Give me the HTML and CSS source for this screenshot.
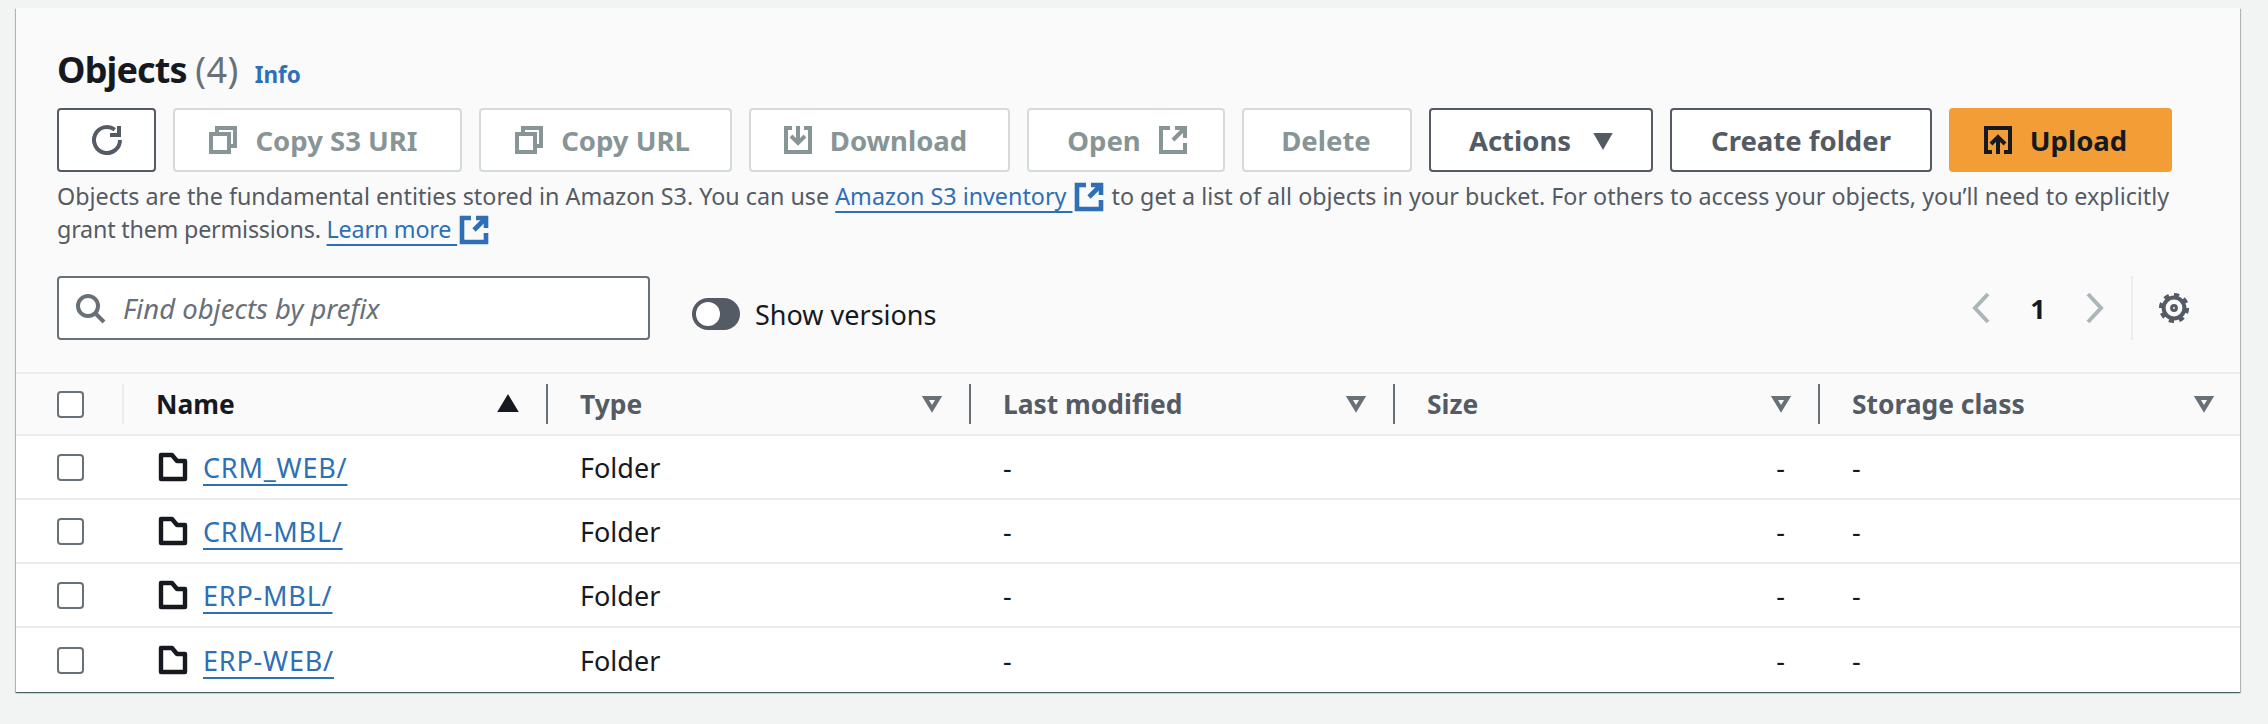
FILE: index.html
```html
<!DOCTYPE html>
<html lang="en">
<head>
<meta charset="utf-8">
<title>Objects</title>
<link rel="stylesheet" href="styles.css">
</head>
<body>
<section class="card">
  <header class="head">
    <div class="title-row">
      <h2 class="title">Objects <span class="count">(4)</span></h2>
      <a class="info">Info</a>
    </div>
    <div class="actions">
      <button class="btn on w-refresh"><svg class="ico" viewBox="0 0 16 16"><path d="M14.5 8A6.5 6.5 0 1 1 11.9 2.8"/><path d="M14 1v4.500h-4.500"/></svg></button>
      <button class="btn w-uri"><svg class="ico" viewBox="0 0 16 16"><path d="M2 5h9v9H2z"/><path d="M5 5V2h9v9h-3"/></svg>Copy S3 URI</button>
      <button class="btn w-url"><svg class="ico" viewBox="0 0 16 16"><path d="M2 5h9v9H2z"/><path d="M5 5V2h9v9h-3"/></svg>Copy URL</button>
      <button class="btn w-down"><svg class="ico" viewBox="0 0 16 16"><path d="M5 2H2v12h12V2h-3"/><path d="M8 1v8"/><path d="M4.500 6 8 9.500 11.500 6"/></svg>Download</button>
      <button class="btn w-open">Open<svg class="ico" viewBox="0 0 16 16"><path d="M6.500 2H2v12h12V9.500"/><path d="M9 2h5v5"/><path d="M14 2 8 8"/></svg></button>
      <button class="btn w-del">Delete</button>
      <button class="btn on w-act">Actions<svg class="ico solid" viewBox="0 0 16 16"><path d="M4 5h8l-4 7z"/></svg></button>
      <button class="btn on w-new">Create folder</button>
      <button class="btn primary w-up"><svg class="ico" viewBox="0 0 16 16"><path d="M5 14H2V2h12v12h-3"/><path d="M8 15V6.500"/><path d="M4.500 10 8 6.500 11.500 10"/></svg>Upload</button>
    </div>
    <p class="desc">Objects are the fundamental entities stored in Amazon S3. You can use <a class="link">Amazon S3 inventory </a><svg class="ico ext" viewBox="0 0 16 16"><path d="M6.500 2H2v12h12V9.500"/><path d="M9 2h5v5"/><path d="M14 2 8 8"/></svg> to get a list of all objects in your bucket. For others to access your objects, you’ll need to explicitly <span class="tight">grant them permissions. <a class="link">Learn more </a></span><svg class="ico ext" viewBox="0 0 16 16"><path d="M6.500 2H2v12h12V9.500"/><path d="M9 2h5v5"/><path d="M14 2 8 8"/></svg></p>
    <div class="tools">
      <label class="search">
        <svg class="ico" viewBox="0 0 16 16"><circle cx="7" cy="7" r="5"/><path d="M15 15l-4.500-4.500"/></svg>
        <span class="placeholder">Find objects by prefix</span>
      </label>
      <div class="toggle"><span class="track"><span class="knob"></span></span><span>Show versions</span></div>
      <nav class="pager">
        <svg class="ico" viewBox="0 0 16 16"><path d="M10.500 1 4 8l6.500 7"/></svg>
        <span class="page">1</span>
        <svg class="ico" viewBox="0 0 16 16"><path d="M5.500 1 12 8l-6.500 7"/></svg>
      </nav>
      <div class="prefs"><svg class="ico gear" viewBox="0 0 16 16"><circle cx="8" cy="8" r="5.200"/><circle class="teeth" cx="8" cy="8" r="6.700" pathLength="32"/><circle cx="8" cy="8" r="1.200" class="hub"/></svg></div>
    </div>
  </header>
  <div class="table">
    <div class="row head-row">
      <div class="cell first"><span class="check"></span></div>
      <div class="cell sort-col active"><span>Name</span><svg class="ico solid dark" viewBox="0 0 16 16"><path d="M8 4l4.500 7.500h-9z"/></svg></div>
      <div class="cell sort-col"><span>Type</span><svg class="ico tri" viewBox="0 0 16 16"><path d="M4.700 5h6.600L8 10.400z"/></svg></div>
      <div class="cell sort-col"><span>Last modified</span><svg class="ico tri" viewBox="0 0 16 16"><path d="M4.700 5h6.600L8 10.400z"/></svg></div>
      <div class="cell sort-col"><span>Size</span><svg class="ico tri" viewBox="0 0 16 16"><path d="M4.700 5h6.600L8 10.400z"/></svg></div>
      <div class="cell sort-col last"><span>Storage class</span><svg class="ico tri" viewBox="0 0 16 16"><path d="M4.700 5h6.600L8 10.400z"/></svg></div>
    </div>
    <div class="row">
      <div class="cell first"><span class="check"></span></div>
      <div class="cell name"><svg class="ico folder" viewBox="0 0 16 16"><path d="M2 2h5.500l2.500 3H14v9H2z"/></svg><a class="link">CRM_WEB/</a></div>
      <div class="cell">Folder</div><div class="cell">-</div><div class="cell size">-</div><div class="cell">-</div>
    </div>
    <div class="row">
      <div class="cell first"><span class="check"></span></div>
      <div class="cell name"><svg class="ico folder" viewBox="0 0 16 16"><path d="M2 2h5.500l2.500 3H14v9H2z"/></svg><a class="link">CRM-MBL/</a></div>
      <div class="cell">Folder</div><div class="cell">-</div><div class="cell size">-</div><div class="cell">-</div>
    </div>
    <div class="row">
      <div class="cell first"><span class="check"></span></div>
      <div class="cell name"><svg class="ico folder" viewBox="0 0 16 16"><path d="M2 2h5.500l2.500 3H14v9H2z"/></svg><a class="link">ERP-MBL/</a></div>
      <div class="cell">Folder</div><div class="cell">-</div><div class="cell size">-</div><div class="cell">-</div>
    </div>
    <div class="row">
      <div class="cell first"><span class="check"></span></div>
      <div class="cell name"><svg class="ico folder" viewBox="0 0 16 16"><path d="M2 2h5.500l2.500 3H14v9H2z"/></svg><a class="link">ERP-WEB/</a></div>
      <div class="cell">Folder</div><div class="cell">-</div><div class="cell size">-</div><div class="cell">-</div>
    </div>
  </div>
</section>
</body>
</html>
```
FILE: styles.css
```css
* { box-sizing: border-box; }
html, body { margin: 0; height: 724px; overflow: hidden; }
body {
  background: #f2f3f3;
  padding: 8px 28px 0 16px;
  font-family: "Noto Sans", sans-serif;
  font-size: 27px;
  color: #16191f;
}
.card {
  background: #fafafa;
  box-shadow: 0 1px 1px rgba(0,28,36,.5), 1px 1px 1px rgba(0,28,36,.22), -1px 1px 1px rgba(0,28,36,.22);
}
.ico {
  width: 32px; height: 32px; flex: none;
  fill: none; stroke: currentColor; stroke-width: 2;
}
.ico.solid { fill: currentColor; stroke-width: 1; }

.head { padding: 32px 68px 0 41px; }
.title-row { display: flex; align-items: baseline; gap: 16px; height: 68px; }
.title { margin: 0; font-size: 36px; line-height: 60px; font-weight: 700; letter-spacing: -.85px; }
.count { font-weight: 400; color: #687078; letter-spacing: .4px; }
.info { color: #2e6fb5; font-size: 22.5px; font-weight: 700; }

.actions { display: flex; gap: 17px; }
.btn {
  display: flex; align-items: center; justify-content: center; gap: 16px;
  height: 64px; padding: 0;
  background: #fff; border: 2px solid #d5dbdb; border-radius: 4px;
  color: #879596; font: 700 27.5px "Noto Sans", sans-serif;
}
.btn.on { border-color: #545b64; color: #545b64; }
.btn.primary { background: #f39d36; border-color: #f39d36; color: #16191f; }
.w-refresh { width: 99px; }
.w-uri { width: 289px; padding-right: 10px; }
.w-url { width: 253px; padding-right: 8px; }
.w-down { width: 261px; padding-right: 10px; }
.w-open { width: 198px; padding-left: 4px; }
.w-del { width: 170px; padding-right: 2px; }
.w-act { width: 224px; padding-left: 6px; }
.w-new { width: 262px; }
.w-up { width: 223px; padding-right: 12px; }

.desc { margin: 8px 0 0; font-size: 23.3px; line-height: 32px; color: #545b64; }
.tight { letter-spacing: -.2px; }
.link { color: #2e6fb5; text-decoration: underline; text-decoration-thickness: 2px; text-underline-offset: 6px; text-decoration-skip-ink: none; }
.ico.ext { vertical-align: -8px; color: #2e6fb5; stroke-width: 2.300; margin-left: 1px; }

.tools { display: flex; align-items: center; margin: 30px -18px 0 0; height: 64px; }
.search {
  display: flex; align-items: center; gap: 17px;
  width: 593px; height: 64px; padding-left: 15px;
  background: #fff; border: 2px solid #687078; border-radius: 4px; color: #687078;
}
.placeholder { font-style: italic; font-size: 27.5px; }
.toggle { display: flex; align-items: center; gap: 15px; margin-left: 42px; margin-top: 12px; }
.track { width: 48px; height: 32px; border-radius: 16px; background: #545b64; padding: 4px; display: block; }
.knob { display: block; width: 24px; height: 24px; border-radius: 50%; background: #fff; }
.pager { margin-left: auto; display: flex; align-items: center; color: #aab7b8; gap: 14px; }
.page { color: #16191f; font-weight: 700; width: 50px; text-align: center; }
.prefs { display: flex; align-items: center; height: 64px; border-left: 2px solid #eaeded; margin-left: 22px; padding-left: 25px; color: #545b64; }
.gear .teeth { stroke-dasharray: 2 2; stroke-width: 1.700; }
.gear .hub { stroke-width: 1.500; }

.table { margin-top: 32px; }
.row {
  display: grid;
  grid-template-columns: 108px 424px 423px 424px 425px 1fr;
  height: 64px; background: #fff; border-bottom: 2px solid #eaeded;
}
.row:last-child { border-bottom: 0; height: 64px; }
.head-row { background: #fafafa; border-top: 2px solid #eaeded; font-weight: 700; font-size: 26.4px; color: #545b64; }
.cell { display: flex; align-items: center; padding-left: 32px; min-width: 0; }
.cell.first { padding-left: 41px; }
.check { width: 27px; height: 27px; border: 2px solid #687078; border-radius: 4px; background: #fff; }
.head-row .first { position: relative; }
.sort-col { justify-content: space-between; padding-right: 23px; position: relative; }
.sort-col.active { color: #16191f; padding-left: 32px; padding-right: 24px; }
.sort-col .ico { color: #687078; }
.sort-col.active .ico { color: #16191f; }
.sort-col::after { content: ""; position: absolute; right: 0; top: 10px; height: 40px; width: 2px; background: #687078; }
.sort-col.last::after { display: none; }
.sort-col.last { padding-right: 20px; }
.head-row .first::after { content: ""; position: absolute; right: 0; top: 10px; height: 40px; width: 2px; background: #eaeded; }
.cell.name { padding-left: 33px; gap: 14px; }
.cell.name .link { letter-spacing: .8px; }
.ico.folder { stroke-width: 2.200; stroke-linejoin: round; }
.cell.size { justify-content: flex-end; padding-right: 35px; }
```
